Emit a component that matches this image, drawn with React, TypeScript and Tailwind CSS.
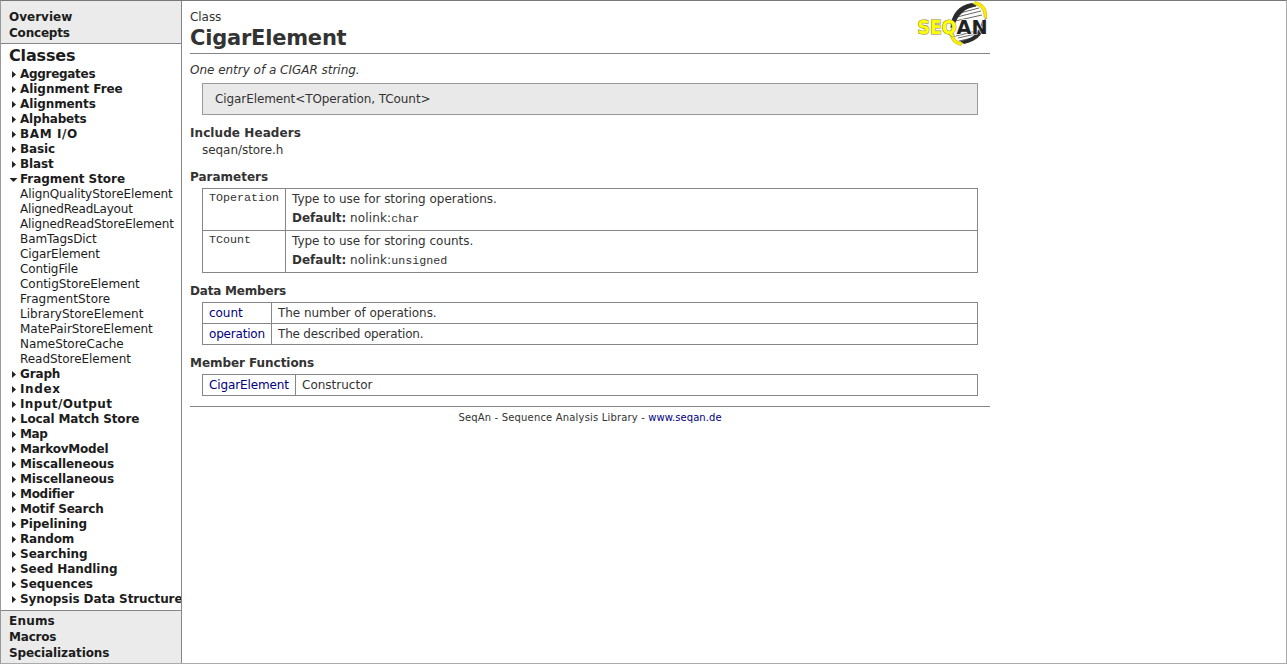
import type { ReactNode } from "react";

const before = [
  ["Aggregates", "tracking-[-0.3px]"],
  ["Alignment Free", "tracking-[-0.05px]"],
  ["Alignments", "tracking-[-0.1px]"],
  ["Alphabets", "tracking-[-0.2px]"],
  ["BAM I/O", "tracking-[0.6px]"],
  ["Basic", "tracking-[-0.15px]"],
  ["Blast", "tracking-[-0.15px]"],
];

const members = [
  ["AlignQualityStoreElement", "tracking-[-0.07px]"],
  ["AlignedReadLayout", "tracking-[-0.2px]"],
  ["AlignedReadStoreElement", "tracking-[-0.12px]"],
  ["BamTagsDict", "tracking-[-0.1px]"],
  ["CigarElement", "tracking-[-0.12px]"],
  ["ContigFile", "tracking-[-0.1px]"],
  ["ContigStoreElement", "tracking-[-0.04px]"],
  ["FragmentStore", "tracking-[0.1px]"],
  ["LibraryStoreElement", "tracking-[0px]"],
  ["MatePairStoreElement", "tracking-[-0.04px]"],
  ["NameStoreCache", "tracking-[-0.06px]"],
  ["ReadStoreElement", "tracking-[-0.04px]"],
];

const after = [
  ["Graph", "tracking-[-0.15px]"],
  ["Index", "tracking-[0.6px]"],
  ["Input/Output", "tracking-[0.4px]"],
  ["Local Match Store", "tracking-[-0.15px]"],
  ["Map", "tracking-[-0.4px]"],
  ["MarkovModel", "tracking-[-0.22px]"],
  ["Miscalleneous", "tracking-[-0.1px]"],
  ["Miscellaneous", "tracking-[-0.1px]"],
  ["Modifier", "tracking-[-0.3px]"],
  ["Motif Search", "tracking-[-0.2px]"],
  ["Pipelining", "tracking-[-0.05px]"],
  ["Random", "tracking-[-0.2px]"],
  ["Searching", "tracking-[0px]"],
  ["Seed Handling", "tracking-[-0.07px]"],
  ["Sequences", "tracking-[0px]"],
  ["Synopsis Data Structures", "tracking-[-0.1px]"],
];

function Group({ label, spacing, open }: { label: string; spacing: string; open?: boolean }) {
  return (
    <li className={`flex h-[15px] items-center whitespace-nowrap font-bold leading-[15px] ${spacing}`}>
      <svg className="mb-px h-[9px] w-[11px] shrink-0" viewBox="0 0 11 9" fill="#222">
        {open ? <path d="M0.5 3H8.5L4.5 7Z" /> : <path d="M3 1L7 4.5L3 8Z" />}
      </svg>
      {label}
    </li>
  );
}

function Section({ title, spacing, children }: { title: string; spacing: string; children: ReactNode }) {
  return (
    <section>
      <h2 className={`h-4 font-bold leading-4 ${spacing}`}>{title}</h2>
      {children}
    </section>
  );
}

function Logo() {
  return (
    <svg className="h-[46px] w-[72px]" viewBox="0 0 72 46">
      <g fill="none" stroke="#555" strokeWidth="0.9">
        <path d="M48 8L60 5M44 12L63 7M41 16L65 10M39 20L66 14M42 37L60 33M43 40L56 37M40 35L64 29" />
      </g>
      <path d="M34.5 27C35 13 43 4 56 2L61 5C48 7 41 15 38 26Z" fill="#2b2b2b" />
      <path d="M70 17C70 30 63 40 48 43L44 40C58 38 64 30 66 20Z" fill="#2b2b2b" />
      <path d="M59 0.5C68 2 72 9 70.5 18L68 16C68 9 65 5 57.5 3Z" fill="#ffed00" stroke="#a8a000" strokeWidth="0.5" />
      <path d="M34 31C33.5 38 38 43 45 44.5L46.5 42C40 40 37 37 37 31Z" fill="#ffed00" stroke="#a8a000" strokeWidth="0.5" />
      <text x="1.5" y="32.7" fontFamily="DejaVu Sans" fontWeight="700" fontSize="19" textLength="39" lengthAdjust="spacingAndGlyphs" letterSpacing="0" fill="#ff0" stroke="#85854a" strokeWidth="1.2" paintOrder="stroke">SEQ</text>
      <text x="40.5" y="32.7" fontFamily="DejaVu Sans" fontWeight="700" fontSize="19" textLength="31" lengthAdjust="spacingAndGlyphs" letterSpacing="0" fill="#222" stroke="#fff" strokeWidth="1.2" paintOrder="stroke">AN</text>
    </svg>
  );
}

const cell = "border border-[#868686] px-1.5 align-top";
const table = "ml-3 mt-[3px] w-[776px] border-collapse";

export default function App() {
  return (
    <div className="flex h-[664px] w-[1287px] overflow-hidden border border-t-[#777] border-r-[#aaa] border-b-[#aaa] border-l-[#999] bg-white font-['DejaVu_Sans',sans-serif] text-[12px] tracking-[-0.05px] text-[#333]">
      <nav className="flex w-[181px] shrink-0 flex-col overflow-hidden border-r border-[#868686] text-[#1c1c1c]">
        <div className="h-[43px] shrink-0 border-b border-[#868686] bg-[#ebebeb] pl-2 pt-2 font-bold leading-4">
          <div className="tracking-[0px]">Overview</div>
          <div className="tracking-[-0.2px]">Concepts</div>
        </div>
        <div className="h-[566px] shrink-0 pl-2 pt-px">
          <h2 className="h-[22px] text-[16px] font-bold leading-[21px] tracking-[-0.15px]">Classes</h2>
          <ul>
            {before.map(([label, spacing]) => <Group key={label} label={label} spacing={spacing} />)}
            <Group label="Fragment Store" spacing="tracking-[-0.06px]" open />
            {members.map(([label, spacing]) => (
              <li key={label} className={`h-[15px] whitespace-nowrap pl-[11px] leading-[15px] ${spacing}`}>{label}</li>
            ))}
            {after.map(([label, spacing]) => <Group key={label} label={label} spacing={spacing} />)}
          </ul>
        </div>
        <div className="grow border-t border-[#868686] bg-[#ebebeb] pl-2 pt-0.5 font-bold leading-4">
          <div className="tracking-[0.2px]">Enums</div>
          <div className="tracking-[-0.2px]">Macros</div>
          <div className="tracking-[-0.1px]">Specializations</div>
        </div>
      </nav>

      <main className="ml-2 w-[800px] shrink-0">
        <header className="flex h-[53px] justify-between border-b border-[#868686]">
          <div className="pt-2">
            <div className="h-4 leading-4">Class</div>
            <h1 className="h-6 pt-px text-[21px] font-bold leading-6 tracking-[-0.22px]">CigarElement</h1>
          </div>
          <div className="mr-0.5"><Logo /></div>
        </header>
        <p className="mt-2 h-4 italic leading-4 tracking-[-0.02px]">One entry of a CIGAR string.</p>
        <div className="ml-3 mt-[5px] h-8 w-[776px] border border-[#999] bg-[#e9e9e9] pl-3 leading-[30px] tracking-[-0.09px]">
          CigarElement&lt;TOperation, TCount&gt;
        </div>
        <div className="mt-[10px] flex flex-col">
          <Section title="Include Headers" spacing="tracking-[0.08px]">
            <p className="ml-3 mt-px h-4 leading-4">seqan/store.h</p>
          </Section>
          <div className="mt-[11px]">
            <Section title="Parameters" spacing="tracking-[0px]">
              <table className={table}>
                <tbody>
                  {[
                    ["TOperation", "operations", "char"],
                    ["TCount", "counts", "unsigned"],
                  ].map(([name, noun, value]) => (
                    <tr key={name} className="h-[42px]">
                      <td className={`${cell} w-[83px] pt-px font-['Liberation_Mono',monospace] text-[11.67px] leading-4 tracking-normal`}>{name}</td>
                      <td className={`${cell} pt-px leading-[19px]`}>
                        <div className="tracking-[-0.03px]">Type to use for storing {noun}.</div>
                        <div><b>Default:</b> <span className="tracking-[0.15px]">nolink:</span><code className="font-['Liberation_Mono',monospace] text-[11.67px] tracking-normal">{value}</code></div>
                      </td>
                    </tr>
                  ))}
                </tbody>
              </table>
            </Section>
          </div>
          <div className="mt-[10px]">
            <Section title="Data Members" spacing="tracking-[-0.2px]">
              <table className={table}>
                <tbody>
                  {[
                    ["count", "The number of operations.", "tracking-[-0.05px]"],
                    ["operation", "The described operation.", "tracking-[-0.2px]"],
                  ].map(([name, text, spacing]) => (
                    <tr key={name} className={`h-[21px] leading-[19px] ${spacing}`}>
                      <td className={`${cell} w-[69px] pt-px text-[#000080]`}><a href="#">{name}</a></td>
                      <td className={`${cell} pt-px`}>{text}</td>
                    </tr>
                  ))}
                </tbody>
              </table>
            </Section>
          </div>
          <div className="mt-[10px]">
            <Section title="Member Functions" spacing="tracking-[-0.05px]">
              <table className={table}>
                <tbody>
                  <tr className="h-[21px] leading-[19px]">
                    <td className={`${cell} w-[93px] pt-px tracking-[-0.12px] text-[#000080]`}><a href="#">CigarElement</a></td>
                    <td className={`${cell} pt-px tracking-[0px]`}>Constructor</td>
                  </tr>
                </tbody>
              </table>
            </Section>
          </div>
        </div>
        <footer className="mt-[10px] border-t border-[#868686] pt-[3px] text-center text-[10px] leading-4 tracking-[0.17px]">
          SeqAn - Sequence Analysis Library - <a href="#" className="tracking-[0.05px] text-[#000080]">www.seqan.de</a>
        </footer>
      </main>
    </div>
  );
}
